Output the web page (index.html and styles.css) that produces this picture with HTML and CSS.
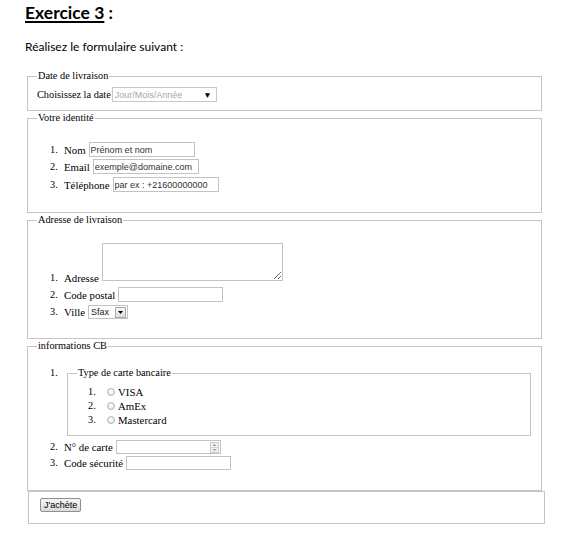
FILE: index.html
```html
<!DOCTYPE html>
<html lang="fr">
<head>
<meta charset="utf-8">
<title>Exercice 3</title>
<link rel="stylesheet" href="styles.css">
</head>
<body>
<div class="page">
  <h1 class="title"><span class="u">Exercice 3</span> :</h1>
  <p class="intro">Réalisez le formulaire suivant :</p>
  <form class="form">
    <fieldset class="fs fs-date">
      <legend>Date de livraison</legend>
      <div class="row">
        <label class="lbl">Choisissez la date</label>
        <div class="dsel"><span class="dsel-text">Jour/Mois/Année</span><span class="dsel-arrow">▼</span></div>
      </div>
    </fieldset>

    <fieldset class="fs fs-id">
      <legend>Votre identité</legend>
      <ol class="list">
        <li class="item"><span class="num">1.</span><label class="lbl">Nom</label><input class="field" type="text" value="Prénom et nom"></li>
        <li class="item"><span class="num">2.</span><label class="lbl">Email</label><input class="field" type="text" value="exemple@domaine.com"></li>
        <li class="item"><span class="num">3.</span><label class="lbl">Téléphone</label><input class="field" type="text" value="par ex : +21600000000"></li>
      </ol>
    </fieldset>

    <fieldset class="fs fs-addr">
      <legend>Adresse de livraison</legend>
      <ol class="list">
        <li class="item item-tall"><span class="num">1.</span><label class="lbl">Adresse</label><textarea class="area"></textarea></li>
        <li class="item item-cp"><span class="num">2.</span><label class="lbl">Code postal</label><input class="field" type="text"></li>
        <li class="item item-ville"><span class="num">3.</span><label class="lbl">Ville</label>
          <div class="vsel"><span class="vsel-text">Sfax</span><span class="vsel-btn"><svg width="5" height="3" viewBox="0 0 5 3"><path d="M0 0h5L2.5 3z" fill="#000"/></svg></span></div>
        </li>
      </ol>
    </fieldset>

    <fieldset class="fs fs-cb">
      <legend>informations CB</legend>
      <ol class="list">
        <li class="item item-nested"><span class="num">1.</span>
          <fieldset class="fs fs-inner">
            <legend>Type de carte bancaire</legend>
            <ol class="list list-inner">
              <li class="ritem"><span class="num">1.</span><input class="radio" type="radio" name="carte"><label class="lbl">VISA</label></li>
              <li class="ritem"><span class="num">2.</span><input class="radio" type="radio" name="carte"><label class="lbl">AmEx</label></li>
              <li class="ritem"><span class="num">3.</span><input class="radio" type="radio" name="carte"><label class="lbl">Mastercard</label></li>
            </ol>
          </fieldset>
        </li>
        <li class="item item-card"><span class="num">2.</span><label class="lbl">N° de carte</label>
          <div class="nfield"><input class="ninput" type="text"><span class="spin"><svg width="9" height="11" viewBox="0 0 9 11"><rect x="0.5" y="0.5" width="8" height="10" fill="#eef0f4" stroke="#c9ccd3"/><line x1="1" y1="5.5" x2="8" y2="5.5" stroke="#d4d7dd"/><path d="M2.5 4h4L4.5 2z" fill="#9aa0aa"/><path d="M2.5 7h4L4.5 9z" fill="#9aa0aa"/></svg></span></div>
        </li>
        <li class="item item-sec"><span class="num">3.</span><label class="lbl">Code sécurité</label><input class="field" type="text"></li>
      </ol>
    </fieldset>

    <fieldset class="fs fs-btn">
      <button class="buy" type="button">J'achète</button>
    </fieldset>
  </form>
</div>
</body>
</html>
```
FILE: styles.css
```css
* { box-sizing: border-box; }

body {
  margin: 0;
  background: #fff;
  color: #000;
  font-family: "Liberation Serif", "Times New Roman", serif;
  font-size: 10.3px;
}

.page { padding-left: 25px; }

.title {
  margin: 3px 0 0;
  font: 700 17.5px/20px Lato, "Open Sans", sans-serif;
}
.title .u {
  text-decoration: underline;
  text-decoration-thickness: 1.5px;
  text-underline-offset: 2px;
}

.intro {
  margin: 17px 0 0;
  font: 400 12px/14px Lato, "Open Sans", sans-serif;
}

.form {
  margin: 16px 0 0 2px;
  width: 515px;
}

.fs {
  margin: 0;
  padding: 0 10px 0 9px;
  border: 1px solid #c4c4c4;
  min-width: 0;
}
.fs legend {
  padding: 0 1px;
  font-size: 10.3px;
  line-height: 12px;
}

.lbl { line-height: 12px; white-space: nowrap; }

/* Fieldset 1 */
.fs-date { padding-top: 5px; padding-bottom: 8px; }
.row { display: flex; align-items: center; height: 15px; }
.row .lbl { margin-right: 1px; }
.dsel {
  display: flex;
  align-items: center;
  justify-content: space-between;
  width: 105px;
  height: 15px;
  border: 1px solid #c8c8c8;
  padding: 0 4px 0 2px;
  font: 9px "Liberation Sans", Arial, sans-serif;
  color: #a8a8a8;
}
.dsel-arrow { color: #000; font-size: 8.5px; }

/* lists */
.list {
  margin: 0;
  padding: 0 0 0 13px;
  list-style: none;
  display: flex;
  flex-direction: column;
}
.item { display: flex; align-items: center; height: 15px; }
.num { width: 14px; flex: none; line-height: 12px; }
.item > .lbl { margin-right: 3px; font-size: 10.8px; }

.field {
  width: 106px;
  height: 15px;
  margin: 0;
  padding: 0 1px;
  border: 1px solid #c3c3c3;
  font: 9px "Liberation Sans", Arial, sans-serif;
  color: #333;
  background: #fff;
  outline: none;
}

/* Fieldset 2 */
.fs-id { margin-top: 1px; padding-top: 18px; padding-bottom: 20px; }
.fs-id .list { gap: 2px; }
.fs-id .item:last-child { margin-top: 1px; }

/* Fieldset 3 */
.fs-addr { margin-top: 1px; padding-top: 17px; padding-bottom: 19px; }
.item-tall { height: 38px; align-items: flex-end; }
.item-tall .num, .item-tall .lbl { margin-bottom: -3px; }
.area {
  width: 181px;
  height: 38px;
  margin: 0;
  border: 1px solid #c3c3c3;
  font: 9px "Liberation Sans", Arial, sans-serif;
}
.item-cp { margin-top: 6px; }
.item-cp .field { width: 105px; }
.item-ville { margin-top: 3px; height: 14px; }
.vsel {
  display: flex;
  align-items: center;
  width: 40px;
  height: 14px;
  border: 1px solid #c3c3c3;
  font: 9px "Liberation Sans", Arial, sans-serif;
  color: #222;
  padding-left: 2px;
}
.vsel-text { flex: 1; }
.vsel-btn {
  display: flex;
  align-items: center;
  justify-content: center;
  width: 11px;
  height: 11px;
  margin-right: 1px;
  border: 1px solid #a9a9a9;
  background: linear-gradient(#f6f6f6, #dedede);
}

/* Fieldset 4 */
.fs-cb { margin-top: 1px; padding-top: 15px; padding-bottom: 20px; }
.item-nested { height: auto; align-items: flex-start; }
.fs-inner {
  flex: 1;
  margin-left: 3px;
  padding: 6px 10px 8px 9px;
}
.list-inner { padding-left: 11px; }
.ritem { display: flex; align-items: center; height: 14px; }
.ritem .lbl { font-size: 10.8px; }
.radio {
  appearance: none;
  -webkit-appearance: none;
  width: 8px;
  height: 8px;
  margin: 0 3px 0 5px;
  border: 1px solid #b4b4b4;
  border-radius: 50%;
  background: radial-gradient(circle at 50% 40%, #ffffff 0, #e4e4e4 80%);
}
.item-card { margin-top: 4px; height: 14px; }
.nfield {
  display: flex;
  align-items: center;
  width: 105px;
  height: 14px;
  border: 1px solid #c3c3c3;
  padding-right: 1px;
}
.ninput {
  flex: 1;
  min-width: 0;
  height: 12px;
  border: 0;
  padding: 0 1px;
  outline: none;
  font: 9px "Liberation Sans", Arial, sans-serif;
}
.spin { display: flex; }
.item-sec { margin-top: 2px; height: 14px; }
.item-sec .field { height: 14px; width: 105px; }

/* Fieldset 5 */
.fs-btn {
  margin-left: 1px;
  width: 517px;
  padding: 6px 10px 11px 11px;
}
.buy {
  display: block;
  height: 14px;
  margin: 0;
  padding: 0 3px;
  border: 1px solid #8f8f8f;
  border-radius: 2px;
  background: linear-gradient(#f6f6f6, #dadada);
  font: 9px "Liberation Sans", Arial, sans-serif;
  line-height: 12px;
  color: #000;
}
```
